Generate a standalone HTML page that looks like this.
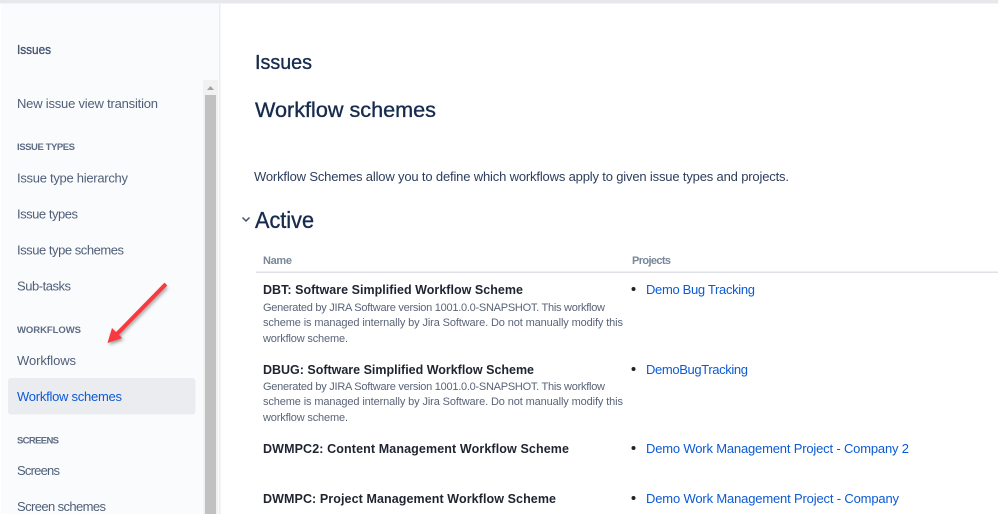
<!DOCTYPE html>
<html><head><meta charset="utf-8"><style>
html,body{margin:0;padding:0;background:#fff;width:998px;height:514px;overflow:hidden}
svg{display:block;position:absolute;left:0;top:0;filter:blur(.25px)}
text{font-family:"Liberation Sans",sans-serif;white-space:pre}
.n{font-size:13px;fill:#505f79}
.h{font-size:9.5px;font-weight:700;fill:#5e6c84}
.t{font-size:12.5px;font-weight:700;fill:#1f2430}
.d{font-size:11px;fill:#5a6478}
.l{font-size:13px;fill:#0b5ad6}
.th{font-size:11px;font-weight:700;fill:#7a869a}
.H{fill:#172b4d;stroke:#172b4d;stroke-width:.35px}
</style></head><body>
<svg width="998" height="514" viewBox="0 0 998 514" xmlns="http://www.w3.org/2000/svg">
<defs><filter id="s" x="-30%" y="-30%" width="160%" height="160%"><feGaussianBlur stdDeviation="1.5"/></filter></defs>
<rect width="998" height="514" fill="#fff"/>
<rect x="1" y="4" width="218" height="510" fill="#fafbfc"/>
<rect x="219" y="4" width="1.5" height="510" fill="#ebecf0"/>
<rect width="998" height="3.5" fill="#e6e8ec"/>
<rect x="8" y="378" width="187.500" height="36.500" rx="3" fill="#ebecf0"/>
<rect x="203" y="80" width="15" height="434" fill="#f1f1f1"/>
<rect x="205" y="95" width="11" height="419" fill="#c1c1c1"/>
<path d="M207 90h7l-3.500-4z" fill="#a3a3a3"/>

<text x="17" y="54" font-size="12.500" fill="#42526e" stroke="#42526e" stroke-width=".3" textLength="34" lengthAdjust="spacingAndGlyphs">Issues</text>
<text class="n" x="17" y="108" textLength="141">New issue view transition</text>
<text class="h" x="17" y="150" textLength="58">ISSUE TYPES</text>
<text class="n" x="17" y="182.500" textLength="111">Issue type hierarchy</text>
<text class="n" x="17" y="218.500" textLength="61">Issue types</text>
<text class="n" x="17" y="254.500" textLength="107">Issue type schemes</text>
<text class="n" x="17" y="290.500" textLength="54">Sub-tasks</text>
<text class="h" x="17" y="333" textLength="64">WORKFLOWS</text>
<text class="n" x="17" y="365" textLength="59">Workflows</text>
<text class="n" x="17" y="401" textLength="105" style="fill:#0b5ad6">Workflow schemes</text>
<text class="h" x="17" y="443.500" textLength="42">SCREENS</text>
<text class="n" x="17" y="475" textLength="43">Screens</text>
<text class="n" x="17" y="511" textLength="89">Screen schemes</text>

<path d="M165 285L114 337" stroke="#555" stroke-opacity=".55" stroke-width="3.500" fill="none" filter="url(#s)" transform="translate(1.500 2)"/>
<path d="M107.500 343L112 328L122 338Z" fill="#555" fill-opacity=".55" filter="url(#s)" transform="translate(1.500 2)"/>
<path d="M164.500 285.500L115 336" stroke="#f9393f" stroke-width="4" stroke-linecap="square" fill="none"/>
<path d="M107.500 343L112 328L122 338Z" fill="#f9393f"/>

<text class="H" x="255" y="69" font-size="20" textLength="57" lengthAdjust="spacingAndGlyphs">Issues</text>
<text class="H" x="255" y="117" font-size="21" textLength="181" lengthAdjust="spacingAndGlyphs">Workflow schemes</text>
<text x="254" y="181" font-size="13" fill="#2c3e5d" textLength="535">Workflow Schemes allow you to define which workflows apply to given issue types and projects.</text>
<path d="M242.500 217.500L246 221L249.500 217.500" stroke="#42526e" stroke-width="1.500" fill="none"/>
<text class="H" x="255" y="228" font-size="23" textLength="59" lengthAdjust="spacingAndGlyphs">Active</text>

<text class="th" x="263" y="264" textLength="29">Name</text>
<text class="th" x="632" y="264" textLength="39">Projects</text>
<rect x="256" y="271.500" width="742" height="1.500" fill="#dfe1e6"/>

<text class="t" x="263" y="294" textLength="260">DBT: Software Simplified Workflow Scheme</text>
<text class="d" x="263" y="311" textLength="342">Generated by JIRA Software version 1001.0.0-SNAPSHOT. This workflow</text>
<text class="d" x="263" y="326" textLength="360">scheme is managed internally by Jira Software. Do not manually modify this</text>
<text class="d" x="263" y="342" textLength="85">workflow scheme.</text>

<text class="t" x="263" y="374" textLength="271">DBUG: Software Simplified Workflow Scheme</text>
<text class="d" x="263" y="390" textLength="342">Generated by JIRA Software version 1001.0.0-SNAPSHOT. This workflow</text>
<text class="d" x="263" y="405" textLength="360">scheme is managed internally by Jira Software. Do not manually modify this</text>
<text class="d" x="263" y="421" textLength="85">workflow scheme.</text>

<text class="t" x="263" y="453" textLength="306">DWMPC2: Content Management Workflow Scheme</text>
<text class="t" x="263" y="503" textLength="293">DWMPC: Project Management Workflow Scheme</text>

<circle cx="633.500" cy="289" r="2" fill="#222"/>
<circle cx="633.500" cy="369" r="2" fill="#222"/>
<circle cx="633.500" cy="448" r="2" fill="#222"/>
<circle cx="633.500" cy="498" r="2" fill="#222"/>
<text class="l" x="646" y="294" textLength="109">Demo Bug Tracking</text>
<text class="l" x="646" y="374" textLength="102">DemoBugTracking</text>
<text class="l" x="646" y="453" textLength="263">Demo Work Management Project - Company 2</text>
<text class="l" x="646" y="503" textLength="253">Demo Work Management Project - Company</text>
</svg>
</body></html>
